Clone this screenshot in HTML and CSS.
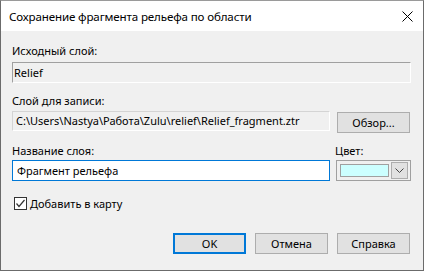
FILE: index.html
```html
<!DOCTYPE html>
<html lang="ru">
<head>
  <meta charset="UTF-8" />
  <title>Сохранение фрагмента рельефа по области</title>
  <link rel="stylesheet" href="styles.css">
</head>
<body>
  <div class="dialog">
    <div class="titlebar">
      <span class="title">Сохранение фрагмента рельефа по области</span>
      <svg class="close" width="11" height="11" viewBox="0 0 11 11">
        <path d="M0.5 0.5 L10.5 10.5 M10.5 0.5 L0.5 10.5" stroke="#000" stroke-width="1" fill="none"/>
      </svg>
    </div>

    <div class="content">
      <div class="group">
        <div class="label">Исходный слой:</div>
        <div class="edit edit-disabled">Relief</div>
      </div>

      <div class="group group-out">
        <div class="label">Слой для записи:</div>
        <div class="row">
          <div class="edit edit-readonly path">C:\Users\Nastya\Работа\Zulu\relief\Relief_fragment.ztr</div>
          <button class="btn btn-browse">Обзор...</button>
        </div>
      </div>

      <div class="row row-name">
        <div class="col-name">
          <div class="label">Название слоя:</div>
          <div class="edit edit-focus">Фрагмент рельефа</div>
        </div>
        <div class="col-color">
          <div class="label">Цвет:</div>
          <div class="color-combo">
            <span class="swatch"></span>
            <span class="drop">
              <svg width="9" height="5" viewBox="0 0 9 5">
                <path d="M0.5 0.5 L4.5 4.5 L8.5 0.5" stroke="#444" stroke-width="1" fill="none"/>
              </svg>
            </span>
          </div>
        </div>
      </div>

      <label class="check">
        <span class="box">
          <svg width="11" height="11" viewBox="0 0 11 11">
            <path d="M1.5 5.5 L4 8.5 L9.5 2" stroke="#333" stroke-width="1.2" fill="none"/>
          </svg>
        </span>
        Добавить в карту
      </label>

      <div class="buttons">
        <button class="btn btn-default">OK</button>
        <button class="btn">Отмена</button>
        <button class="btn">Справка</button>
      </div>
    </div>
  </div>
</body>
</html>
```

FILE: styles.css
```css
:root {
  --face: #f0f0f0;
  --btn: #e1e1e1;
  --btn-border: #adadad;
  --accent: #0078d7;
  --frame: #6b6b6b;
}

html, body {
  margin: 0;
  padding: 0;
}

body {
  font-family: "Noto Sans", sans-serif;
  font-size: 11px;
  color: #000;
  background: var(--face);
}

.dialog {
  width: 424px;
  height: 271px;
  box-sizing: border-box;
  border: 1px solid var(--frame);
  border-top-color: #9a9a9a;
  background: var(--face);
  display: flex;
  flex-direction: column;
}

.titlebar {
  height: 30px;
  flex-shrink: 0;
  background: #fff;
  display: flex;
  align-items: center;
  justify-content: space-between;
  padding: 0 10px 0 8px;
}

.title {
  font-size: 11.6px;
  letter-spacing: -0.15px;
}

.close {
  display: block;
}

.content {
  padding: 12px 12px 0 11px;
}

.label {
  height: 16px;
  line-height: 16px;
  white-space: nowrap;
}

.edit {
  box-sizing: border-box;
  height: 21px;
  line-height: 19px;
  padding: 0 3px;
  white-space: nowrap;
  overflow: hidden;
}

.group .label {
  margin-bottom: 3px;
}

.edit-disabled {
  border: 1px solid #fff;
  border-top-color: #a0a0a0;
  border-left-color: #a0a0a0;
  padding-left: 1px;
}

.group-out {
  margin-top: 10px;
}

.group-out .label {
  margin-bottom: 2px;
}

.row {
  display: flex;
  align-items: flex-start;
}

.edit-readonly {
  width: 318px;
  height: 20px;
  line-height: 18px;
  border: 1px solid #fff;
  border-top-color: #d4d4d4;
  border-left-color: #d4d4d4;
}

.btn {
  box-sizing: border-box;
  width: 73px;
  height: 21px;
  padding: 0;
  margin: 0;
  font-family: inherit;
  font-size: inherit;
  color: #000;
  background: var(--btn);
  border: 1px solid var(--btn-border);
}

.btn-browse {
  margin-left: 7px;
  margin-top: 1px;
}

.row-name {
  margin-top: 10px;
  justify-content: space-between;
}

.row-name .label {
  margin-bottom: 1px;
}

.col-name {
  width: 318px;
}

.edit-focus {
  background: #fff;
  border: 1px solid var(--accent);
  padding-left: 4px;
}

.col-color {
  width: 75px;
}

.col-color .label {
  margin-left: -1px;
}

.color-combo {
  box-sizing: border-box;
  height: 21px;
  border: 1px solid #a0a0a0;
  background: var(--face);
  display: flex;
  align-items: center;
  padding: 0 2px 0 3px;
  gap: 2px;
}

.swatch {
  box-sizing: border-box;
  width: 51px;
  height: 13px;
  background: #ccffff;
  border: 1px solid #a0a0a0;
}

.drop {
  box-sizing: border-box;
  width: 17px;
  height: 17px;
  background: var(--btn);
  border: 1px solid var(--btn-border);
  display: flex;
  align-items: center;
  justify-content: center;
}

.drop svg {
  display: block;
}

.check {
  margin-top: 14px;
  height: 16px;
  display: flex;
  align-items: center;
  gap: 3px;
  padding-left: 2px;
}

.box {
  box-sizing: border-box;
  width: 13px;
  height: 13px;
  border: 1px solid #333;
  background: #fff;
  display: flex;
  align-items: center;
  justify-content: center;
}

.box svg {
  display: block;
}

.buttons {
  margin-top: 22px;
  display: flex;
  justify-content: flex-end;
  gap: 9px;
  padding-right: 1px;
}

.btn-default {
  border: 2px solid var(--accent);
}
```
